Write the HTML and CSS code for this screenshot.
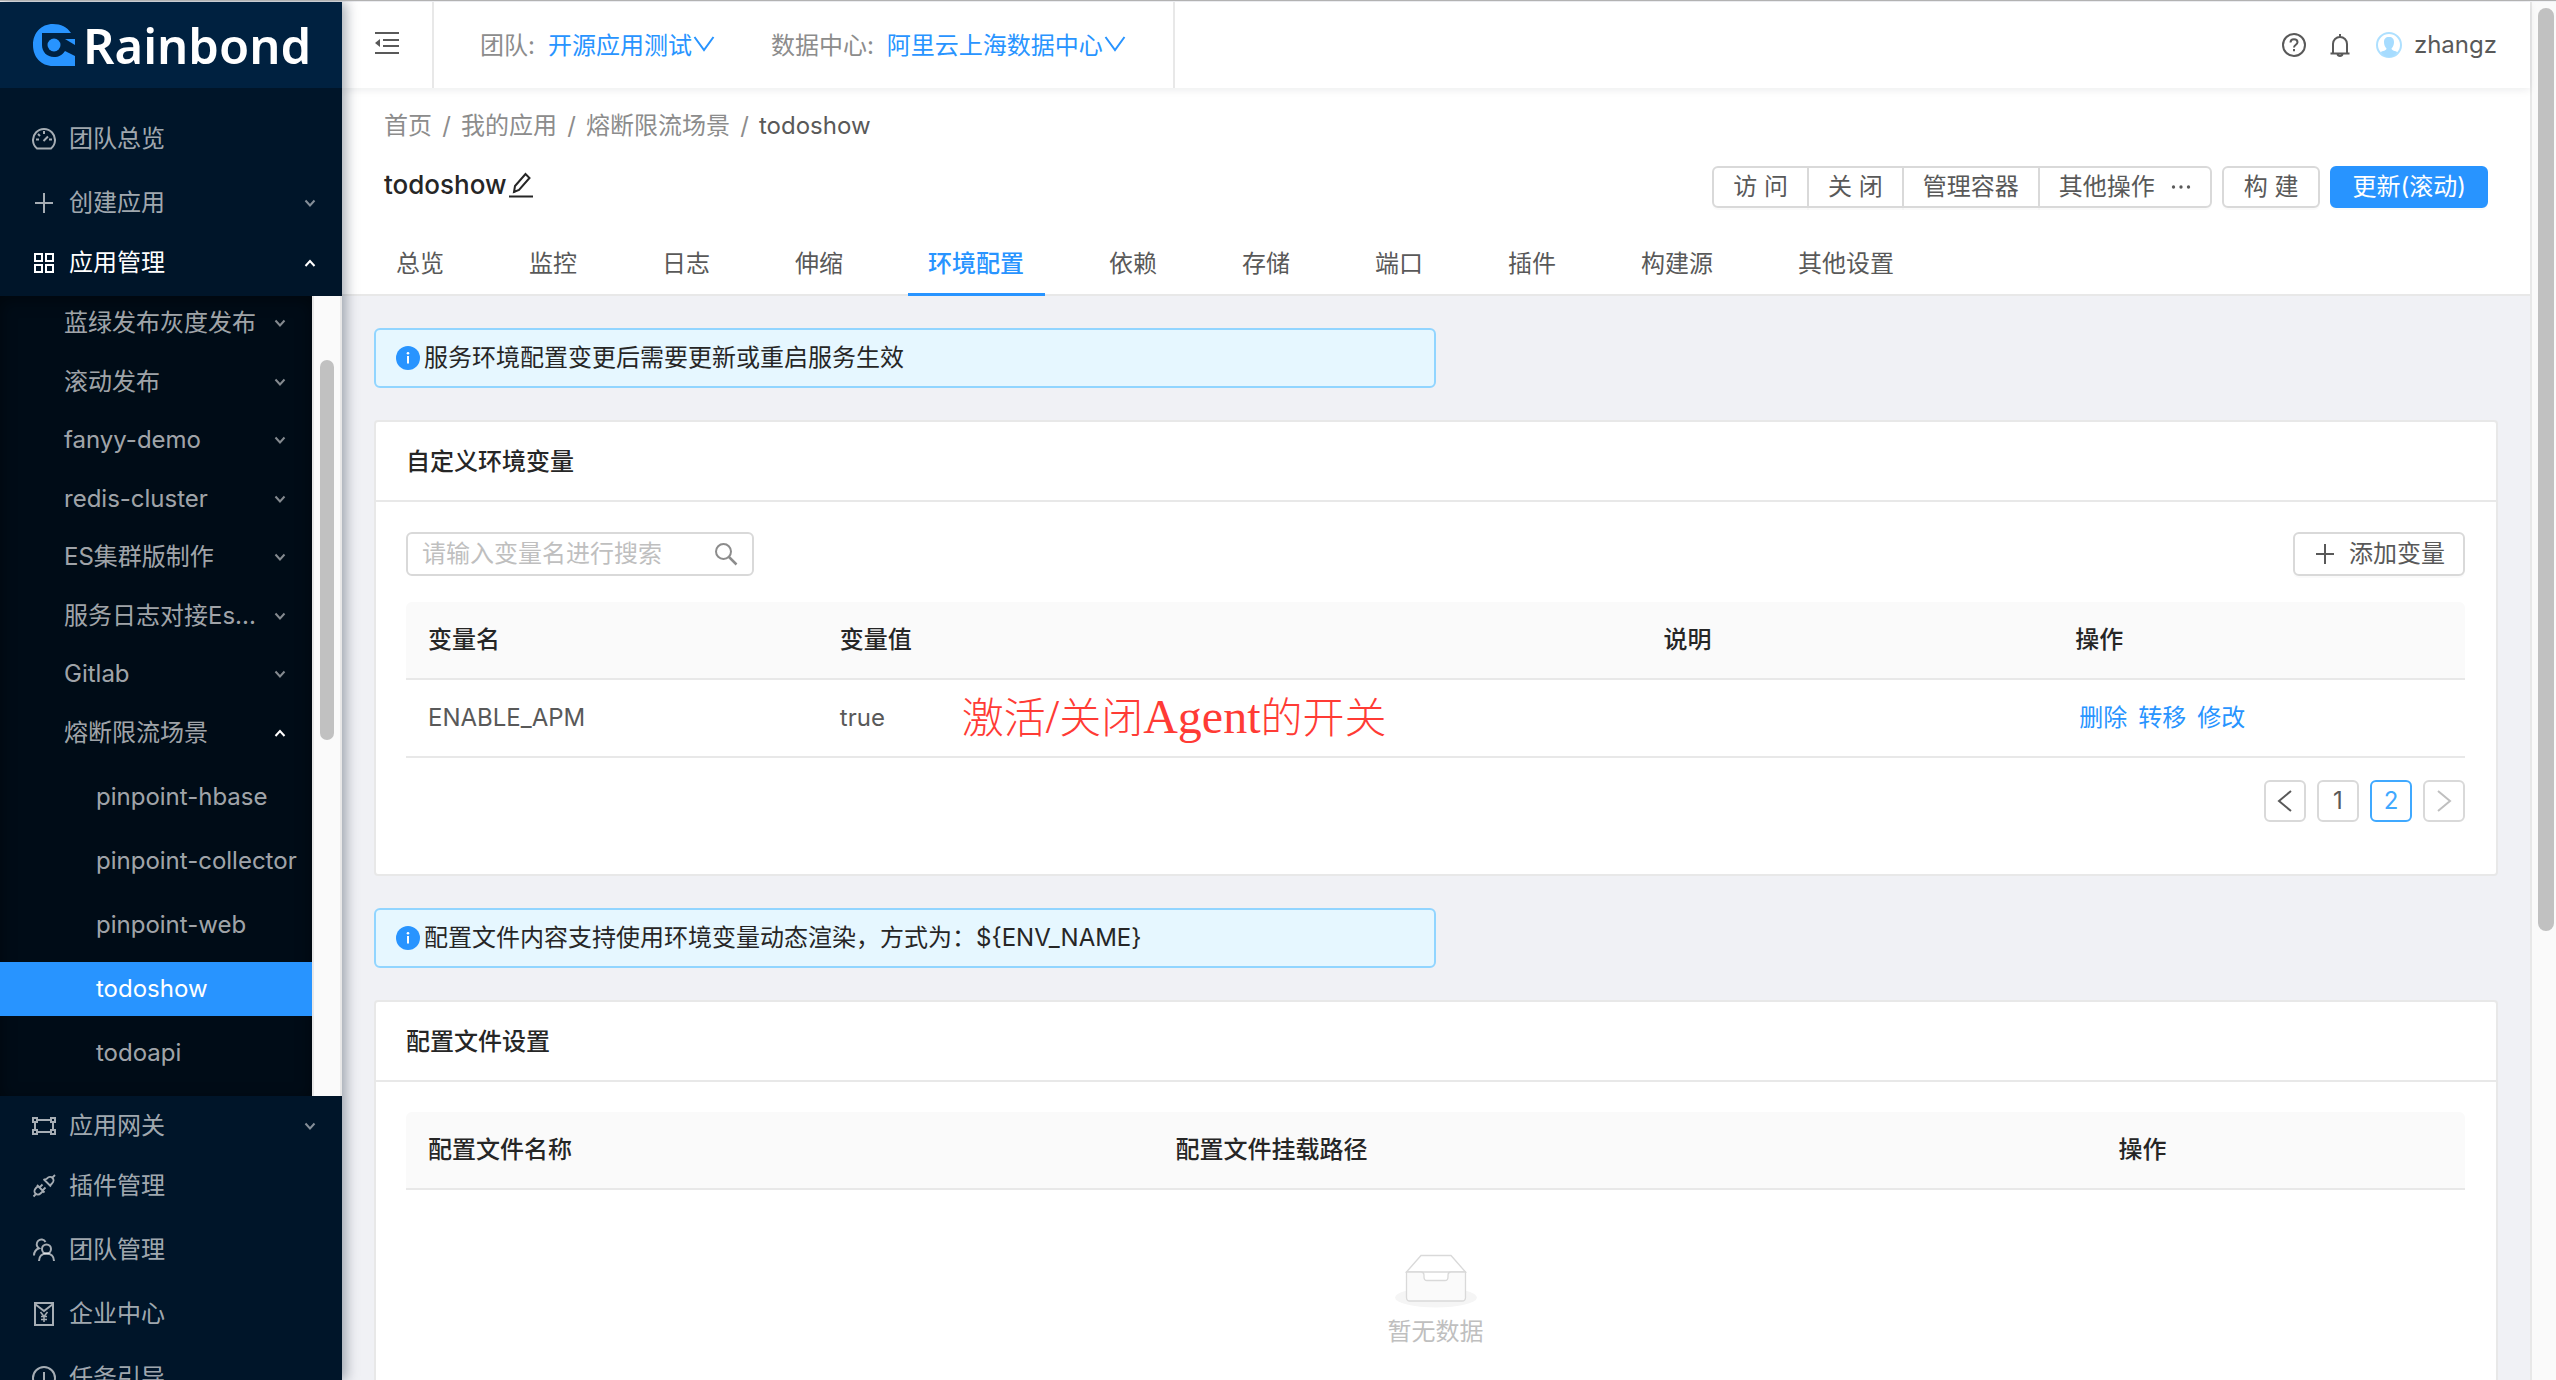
FILE: index.html
```html
<!DOCTYPE html>
<html lang="zh-CN">
<head>
<meta charset="utf-8">
<meta name="viewport" content="width=device-width, initial-scale=1">
<title>Rainbond - todoshow</title>
<link rel="stylesheet" href="styles.css">
</head>
<body>
<svg class="sprite" aria-hidden="true">
  <symbol id="i-down" viewBox="0 0 12 12"><path d="M1.5 3.5 6 8.500l4.500-5" fill="none" stroke="currentColor" stroke-width="2"/></symbol>
  <symbol id="i-up" viewBox="0 0 12 12"><path d="M1.500 9 6 4l4.500 5" fill="none" stroke="currentColor" stroke-width="2"/></symbol>
  <symbol id="i-info" viewBox="0 0 24 24"><circle cx="12" cy="12" r="12" fill="currentColor"/><path d="M12 10v7.500" stroke="#fff" stroke-width="2"/><circle cx="12" cy="7.300" r="1.300" fill="#fff"/></symbol>
  <symbol id="i-plus" viewBox="0 0 24 24"><path d="M12 2v20M3 12h18" fill="none" stroke="currentColor" stroke-width="2"/></symbol>
</svg>
<div class="layout">
  <aside class="sider">
    <a class="logo" href="#">
      <svg class="logo-mark" viewBox="0 0 42 42" aria-hidden="true">
        <path fill="#2894ff" d="M38 9H9v12c0 7 5 12 12 12 5 0 8-2 11-6l10 5v10H20C8 42 0 33 0 21S8 0 20 0c8 0 14 3 18 9z"/>
        <circle cx="21" cy="21" r="6.500" fill="#2894ff"/>
        <path fill="#2894ff" d="M32 15h10v6z"/>
      </svg>
      <span>Rainbond</span>
    </a>
    <nav class="menu">
      <a class="item" href="#">
        <svg class="icon" viewBox="0 0 24 24" aria-hidden="true"><g fill="none" stroke="currentColor" stroke-width="2"><path d="M5 21.500a11 11 0 1 1 14 0z"/><path d="M11.500 14 16 9.500M12 4v3M4 12.500h3M17 12.500h3M6 7l2 2" /></g></svg>
        <span>团队总览</span>
      </a>
      <a class="item sub" href="#">
        <svg class="icon" aria-hidden="true"><use href="#i-plus"/></svg>
        <span>创建应用</span>
        <svg class="arrow" aria-hidden="true"><use href="#i-down"/></svg>
      </a>
      <a class="item sub open" href="#">
        <svg class="icon" viewBox="0 0 24 24" aria-hidden="true"><path d="M3 3h7v7H3zM14 3h7v7h-7zM3 14h7v7H3zM14 14h7v7h-7z" fill="none" stroke="currentColor" stroke-width="2"/></svg>
        <span>应用管理</span>
        <svg class="arrow" aria-hidden="true"><use href="#i-up"/></svg>
      </a>
      <div class="apps">
        <div class="apps-body">
          <div class="app-list">
            <a href="#"><span>蓝绿发布灰度发布</span><svg class="arrow" aria-hidden="true"><use href="#i-down"/></svg></a>
            <a href="#"><span>滚动发布</span><svg class="arrow" aria-hidden="true"><use href="#i-down"/></svg></a>
            <a href="#"><span>fanyy-demo</span><svg class="arrow" aria-hidden="true"><use href="#i-down"/></svg></a>
            <a href="#"><span>redis-cluster</span><svg class="arrow" aria-hidden="true"><use href="#i-down"/></svg></a>
            <a href="#"><span>ES集群版制作</span><svg class="arrow" aria-hidden="true"><use href="#i-down"/></svg></a>
            <a href="#"><span>服务日志对接Es...</span><svg class="arrow" aria-hidden="true"><use href="#i-down"/></svg></a>
            <a href="#"><span>Gitlab</span><svg class="arrow" aria-hidden="true"><use href="#i-down"/></svg></a>
            <a href="#"><span>熔断限流场景</span><svg class="arrow lit" aria-hidden="true"><use href="#i-up"/></svg></a>
          </div>
          <div class="service-list">
            <a href="#">pinpoint-hbase</a>
            <a href="#">pinpoint-collector</a>
            <a href="#">pinpoint-web</a>
            <a href="#" class="current">todoshow</a>
            <a href="#">todoapi</a>
          </div>
        </div>
        <div class="track"><div class="thumb apps-thumb"></div></div>
      </div>
      <a class="item sub" href="#">
        <svg class="icon" viewBox="0 0 24 24" aria-hidden="true"><g fill="none" stroke="currentColor" stroke-width="2"><path d="M1 4h4v4H1zM19 4h4v4h-4zM1 16h4v4H1zM19 16h4v4h-4zM5 6h14M5 18h14M3 8v8M21 8v8"/></g></svg>
        <span>应用网关</span>
        <svg class="arrow" aria-hidden="true"><use href="#i-down"/></svg>
      </a>
      <a class="item" href="#">
        <svg class="icon" viewBox="0 0 24 24" aria-hidden="true"><g fill="none" stroke="currentColor" stroke-width="1.800"><path d="m12.500 6 5.500 5.500 2-2c2-2 2-4 .5-5.500s-3.500-1.500-5.500.5zM11.500 5l7.500 7.500M5 11l7.500 7.500M6 12l-2 2c-2 2-2 4-.5 5.500s3.500 1.500 5.500-.5l2-2M20.500 3.500 23 1M1.500 22.500 4 20M8 13l2.500-2.500M11 16l2.500-2.500"/></g></svg>
        <span>插件管理</span>
      </a>
      <a class="item" href="#">
        <svg class="icon" viewBox="0 0 24 24" aria-hidden="true"><g fill="none" stroke="currentColor" stroke-width="2"><circle cx="14.500" cy="11" r="4.500"/><path d="M7 23c0-4.500 3-7.500 7.500-7.500S22 18.500 22 23M13.500 4A4.700 4.700 0 1 0 7 10.300C4 11.500 2 14 2 17.500"/></g></svg>
        <span>团队管理</span>
      </a>
      <a class="item" href="#">
        <svg class="icon" viewBox="0 0 24 24" aria-hidden="true"><g fill="none" stroke="currentColor" stroke-width="2"><path d="M3 1h18v22H3zM3 2l9 7 9-7"/><path d="m8.500 10 3.500 4.500 3.500-4.500M12 14v6M9 14.500h6M9 17.500h6" stroke-width="1.500"/></g></svg>
        <span>企业中心</span>
      </a>
      <a class="item" href="#">
        <svg class="icon" viewBox="0 0 24 24" aria-hidden="true"><g fill="none" stroke="currentColor" stroke-width="2"><circle cx="12" cy="12" r="11"/><path d="M12 6v8M12 16v2"/></g></svg>
        <span>任务引导</span>
      </a>
    </nav>
  </aside>

  <div class="main">
    <header class="topbar">
      <button class="fold" type="button" aria-label="收起菜单">
        <svg viewBox="0 0 24 24" aria-hidden="true"><path d="M0 2h24M8 9h16M8 15h16M0 22h24" stroke="currentColor" stroke-width="2"/><path d="M0 12l5-4v8z" fill="currentColor"/></svg>
      </button>
      <div class="scope">
        <div class="pick"><span>团队:</span><a href="#">开源应用测试<svg viewBox="0 0 24 24" aria-hidden="true"><path d="M2.500 3 12 16l9.500-13" fill="none" stroke="currentColor" stroke-width="2"/></svg></a></div>
        <div class="pick"><span>数据中心:</span><a href="#">阿里云上海数据中心<svg viewBox="0 0 24 24" aria-hidden="true"><path d="M2.500 3 12 16l9.500-13" fill="none" stroke="currentColor" stroke-width="2"/></svg></a></div>
      </div>
      <div class="user">
        <svg class="icon" viewBox="0 0 24 24" aria-hidden="true"><g fill="none" stroke="currentColor" stroke-width="2"><circle cx="12" cy="12" r="11"/><path d="M8.500 9.500c0-2 1.500-3.300 3.500-3.300s3.500 1.300 3.500 3.100c0 2.400-3.500 2.500-3.500 5.200M12 16v2.200"/></g></svg>
        <svg class="icon bell" viewBox="0 0 24 24" aria-hidden="true"><path d="M2.500 20.500h19M5 20V11a7 7 0 0 1 14 0v9M12 1v3M9.500 21c.5 2.500 4.500 2.500 5 0" fill="none" stroke="currentColor" stroke-width="2"/></svg>
        <svg class="avatar" viewBox="0 0 26 26" aria-hidden="true"><circle cx="13" cy="13" r="12" fill="#fff" stroke="#aee0ff" stroke-width="2"/><path fill="#a6dcff" d="M13 5c3.500 0 5 2 5 5s-1 5-2.500 6.500c0 2 4 2.500 6 3.500-2 3-5 5-8.500 5s-6.500-2-8.500-5c2-1 6-1.500 6-3.500C9 15 8 13 8 10s1.500-5 5-5z"/></svg>
        <span>zhangz</span>
      </div>
    </header>

    <section class="page-head">
      <nav class="crumbs" aria-label="面包屑"><a href="#">首页</a><i>/</i><a href="#">我的应用</a><i>/</i><a href="#">熔断限流场景</a><i>/</i><span>todoshow</span></nav>
      <div class="title-row">
        <h1>todoshow<svg viewBox="0 0 24 26" aria-hidden="true"><path d="M0 24.500h24M5 20l1-6L16.500 2l4 4L10 18zM5 20l2-1" fill="none" stroke="currentColor" stroke-width="2"/></svg></h1>
        <div class="actions">
          <div class="group">
            <button class="btn" type="button">访 问</button>
            <button class="btn" type="button">关 闭</button>
            <button class="btn" type="button">管理容器</button>
            <button class="btn" type="button">其他操作<svg viewBox="0 0 24 24" aria-hidden="true"><g fill="currentColor"><circle cx="3" cy="12" r="2"/><circle cx="12" cy="12" r="2"/><circle cx="21" cy="12" r="2"/></g></svg></button>
          </div>
          <button class="btn" type="button">构 建</button>
          <button class="btn primary" type="button">更新(滚动)</button>
        </div>
      </div>
      <nav class="tabs">
        <a href="#">总览</a><a href="#">监控</a><a href="#">日志</a><a href="#">伸缩</a><a href="#" class="active">环境配置</a><a href="#">依赖</a><a href="#">存储</a><a href="#">端口</a><a href="#">插件</a><a href="#">构建源</a><a href="#">其他设置</a>
      </nav>
    </section>

    <main class="content">
      <p class="alert"><svg class="icon" aria-hidden="true"><use href="#i-info"/></svg><span>服务环境配置变更后需要更新或重启服务生效</span></p>

      <section class="card">
        <h2>自定义环境变量</h2>
        <div class="card-body">
          <div class="toolbar">
            <label class="search">
              <input type="text" placeholder="请输入变量名进行搜索" aria-label="变量名">
              <svg viewBox="0 0 24 24" aria-hidden="true"><circle cx="9.500" cy="9.500" r="7.500" fill="none" stroke="currentColor" stroke-width="2"/><path d="m15 15 7.500 7.500" stroke="currentColor" stroke-width="2.500"/></svg>
            </label>
            <button class="btn add" type="button"><svg class="icon" aria-hidden="true"><use href="#i-plus"/></svg>添加变量</button>
          </div>
          <table class="env">
            <thead><tr><th>变量名</th><th>变量值</th><th>说明</th><th>操作</th></tr></thead>
            <tbody><tr>
              <td>ENABLE_APM</td>
              <td class="noted">true<span class="note">激活<b>/</b>关闭<b>Agent</b>的开关</span></td>
              <td></td>
              <td><div class="links"><a href="#">删除</a><a href="#">转移</a><a href="#">修改</a></div></td>
            </tr></tbody>
          </table>
          <nav class="pager" aria-label="分页">
            <button type="button" aria-label="上一页"><svg viewBox="0 0 24 24" aria-hidden="true"><path d="M18 2 6 12l12 10" fill="none" stroke="currentColor" stroke-width="2"/></svg></button>
            <button type="button">1</button>
            <button type="button" class="on">2</button>
            <button type="button" disabled aria-label="下一页"><svg viewBox="0 0 24 24" aria-hidden="true"><path d="m6 2 12 10L6 22" fill="none" stroke="currentColor" stroke-width="2"/></svg></button>
          </nav>
        </div>
      </section>

      <p class="alert"><svg class="icon" aria-hidden="true"><use href="#i-info"/></svg><span>配置文件内容支持使用环境变量动态渲染，方式为：${ENV_NAME}</span></p>

      <section class="card">
        <h2>配置文件设置</h2>
        <div class="card-body">
          <table class="files">
            <thead><tr><th>配置文件名称</th><th>配置文件挂载路径</th><th>操作</th></tr></thead>
          </table>
          <div class="empty">
            <svg viewBox="0 0 82 54" aria-hidden="true"><ellipse cx="41" cy="43.500" rx="41" ry="10" fill="#f5f5f5"/><path d="M11.500 18 26 1.500h30L70.500 18z" fill="#fff" stroke="#d9d9d9" stroke-width="1.300"/><path d="M11.500 18H26c2 0 3 1.500 3 3.500V23c0 2 1 3.500 3 3.500h18c2 0 3-1.500 3-3.500v-1.500c0-2 1-3.500 3-3.500h14.500v25.500c0 2-1.500 3.500-3.500 3.500H15c-2 0-3.500-1.500-3.500-3.500z" fill="#fafafa" stroke="#d9d9d9" stroke-width="1.300"/></svg>
            <span>暂无数据</span>
          </div>
        </div>
      </section>
    </main>
  </div>
  <div class="track page-track"><div class="thumb page-thumb"></div></div>
</div>
</body>
</html>
```

FILE: styles.css
```css
* { box-sizing: border-box; }

:root {
  --blue: #2894ff;
  --line: #e8e8e8;
  --edge: #d9d9d9;
  --text: #595959;
  --strong: #262626;
  --muted: #8c8c8c;
}

body {
  margin: 0;
  height: 100vh;
  overflow: hidden;
  font: 24px/36px Inter, "Noto Sans CJK SC", sans-serif;
  color: var(--text);
  background: #f0f1f5;
}

a { color: inherit; text-decoration: none; }
button, input { font: inherit; color: inherit; }
svg { display: block; flex: none; }
.sprite { position: absolute; width: 0; height: 0; }
.icon { width: 24px; height: 24px; }
.arrow { width: 12px; height: 12px; opacity: .8; }

.layout {
  display: flex;
  height: 100vh;
  padding-top: 1px;
  border-top: 1px solid #b2b2b2;
  overflow: hidden;
}

/* sidebar */
.sider {
  position: relative;
  z-index: 2;
  flex: none;
  width: 342px;
  background: #001529;
  box-shadow: 4px 0 12px rgba(0, 21, 41, .35);
  color: rgba(255, 255, 255, .65);
}
.logo {
  display: flex;
  align-items: center;
  gap: 8px;
  height: 86px;
  padding-left: 33px;
  background: #002140;
  color: #fff;
  font: 600 49px/60px "Noto Sans", sans-serif;
}
.logo-mark { width: 42px; height: 42px; }
.menu { padding-top: 19px; }
.item {
  display: flex;
  align-items: center;
  gap: 13px;
  height: 56px;
  margin: 4px 0;
  padding: 0 26px 0 32px;
}
.item + .item { margin-top: 8px; }
.item.sub { margin-bottom: 0; }
.item.sub + .item { margin-top: 4px; }
.item .arrow { margin-left: auto; }
.open { color: #fff; }
.open .arrow, .lit { opacity: 1; color: #fff; }

.apps {
  display: flex;
  margin: 5px 0 -2px;
  height: 800px;
  overflow: hidden;
}
.apps-body {
  flex: 1;
  background: #000c17;
  box-shadow: inset 0 4px 16px rgba(0, 0, 0, .45);
}
.app-list {
  display: grid;
  grid-auto-rows: 1fr;
  height: 468px;
  margin-top: -2px;
}
.app-list a {
  display: flex;
  align-items: center;
  justify-content: space-between;
  padding: 0 26px 0 64px;
}
.service-list {
  display: grid;
  gap: 10px;
  padding-top: 8px;
}
.service-list a {
  height: 54px;
  padding-left: 96px;
  line-height: 54px;
}
.service-list .current { background: var(--blue); color: #fff; }

/* scrollbars */
.track {
  flex: none;
  width: 30px;
  padding: 0 6px;
  background: #fafafa;
  border: solid var(--line);
  border-width: 0 2px;
}
.thumb { border-radius: 8px; background: #c1c1c1; }
.apps-thumb { height: 380px; margin-top: 64px; }
.page-track { width: 26px; border-right: 0; padding-right: 2px; }
.page-thumb { height: 67%; margin-top: 6px; }

/* top bar */
.main {
  display: flex;
  flex: 1;
  flex-direction: column;
  min-width: 0;
}
.topbar {
  position: relative;
  z-index: 1;
  display: flex;
  flex: none;
  height: 86px;
  background: #fff;
  box-shadow: 0 2px 8px rgba(0, 21, 41, .08);
}
.fold {
  width: 92px;
  padding: 0 0 4px 33px;
  border: 0;
  border-right: 2px solid var(--line);
  background: none;
}
.fold svg { width: 24px; height: 24px; }
.scope {
  display: flex;
  align-items: center;
  gap: 55px;
  padding: 2px 46px 0;
  border-right: 2px solid var(--line);
}
.pick { display: flex; gap: 13px; color: var(--muted); }
.pick a { display: flex; align-items: center; color: var(--blue); }
.pick svg { width: 24px; height: 24px; }
.user {
  display: flex;
  align-items: center;
  margin-left: auto;
  padding-right: 33px;
}
.bell { margin: 0 24px 0 22px; }
.avatar { width: 26px; height: 26px; margin-right: 12px; }

/* page heading */
.page-head {
  flex: none;
  padding: 20px 42px 0;
  background: #fff;
  border-bottom: 2px solid var(--line);
}
.crumbs { display: flex; color: var(--muted); }
.crumbs i { width: 29px; text-align: center; font-style: normal; }
.crumbs span { color: var(--text); }
.title-row {
  display: flex;
  align-items: center;
  justify-content: space-between;
  height: 42px;
  margin-top: 22px;
}
h1 {
  display: flex;
  align-items: center;
  gap: 2px;
  margin: 0;
  padding-bottom: 4px;
  color: var(--strong);
  font-size: 26px;
  font-weight: 500;
}
h1 svg { width: 24px; height: 26px; }
.actions { display: flex; gap: 10px; }
.group { display: flex; }
.btn {
  display: flex;
  align-items: center;
  height: 42px;
  padding: 0 20px;
  border: 2px solid var(--edge);
  border-radius: 6px;
  background: #fff;
  box-shadow: 0 2px 0 rgba(0, 0, 0, .02);
  white-space: nowrap;
}
.btn.primary { background: var(--blue); border-color: var(--blue); color: #fff; }
.group .btn { padding: 0 19px; border-radius: 0; margin-left: -2px; }
.group .btn:first-child { border-radius: 6px 0 0 6px; }
.group .btn:last-child { border-radius: 0 6px 6px 0; }
.group svg { width: 20px; height: 20px; margin-left: 16px; }
.tabs {
  display: flex;
  gap: 44px;
  margin: 22px 0 -2px -8px;
}
.tabs a {
  height: 66px;
  padding: 16px 21px 0 20px;
}
.tabs .active {
  border-bottom: 3px solid var(--blue);
  color: var(--blue);
  font-weight: 500;
}

/* content */
.content {
  display: flex;
  flex-direction: column;
  gap: 32px;
  padding: 32px;
}
.alert {
  display: flex;
  flex: none;
  align-items: center;
  gap: 4px;
  width: 50%;
  height: 60px;
  margin: 0;
  padding: 0 20px;
  border: 2px solid #91d5ff;
  border-radius: 6px;
  background: #e6f7ff;
  color: var(--strong);
}
.alert .icon { color: var(--blue); }
.card {
  flex: none;
  border: 2px solid var(--line);
  border-radius: 4px;
  background: #fff;
}
h2 {
  height: 80px;
  margin: 0;
  padding: 22px 30px;
  border-bottom: 2px solid var(--line);
  color: var(--strong);
  font-size: 24px;
  font-weight: 500;
}
.card-body { padding: 30px 31px 52px 30px; }
.toolbar {
  display: flex;
  justify-content: space-between;
  margin-bottom: 26px;
}
.search {
  display: flex;
  align-items: center;
  width: 348px;
  height: 44px;
  padding: 0 14px;
  border: 2px solid var(--edge);
  border-radius: 6px;
  color: var(--muted);
}
.search input {
  flex: 1;
  min-width: 0;
  padding: 0;
  border: 0;
  outline: 0;
  background: none;
}
.search input::placeholder { color: #bfbfbf; opacity: 1; }
.search svg { width: 24px; height: 24px; }
.add { height: 44px; padding: 0 18px; gap: 12px; }

table {
  width: 100%;
  border-collapse: separate;
  border-spacing: 0;
  table-layout: fixed;
}
th, td {
  height: 78px;
  padding: 0 22px;
  border-bottom: 2px solid var(--line);
  text-align: left;
}
th {
  background: #fafafa;
  color: var(--strong);
  font-weight: 500;
}
th:first-child { border-top-left-radius: 6px; }
th:last-child { border-top-right-radius: 6px; }
.env th { width: 20%; }
.env th:nth-child(2) { width: 40%; }
.files th:nth-child(1) { width: 36.3%; }
.files th:nth-child(2) { width: 45.8%; }
.noted { position: relative; }
.note {
  position: absolute;
  top: 8px;
  left: 144px;
  color: #ff3b35;
  font: 300 42px/54px "Noto Sans CJK SC", sans-serif;
  white-space: nowrap;
}
.note b { font: 400 48px/54px "Liberation Serif", serif; }
.links { display: flex; gap: 11px; padding-left: 4px; color: var(--blue); }

.pager {
  display: flex;
  justify-content: flex-end;
  gap: 11px;
  margin-top: 22px;
}
.pager button {
  display: grid;
  place-items: center;
  width: 42px;
  height: 42px;
  padding: 0;
  border: 2px solid var(--edge);
  border-radius: 6px;
  background: #fff;
}
.pager svg { width: 24px; height: 24px; }
.pager .on { border-color: #40a9ff; color: #40a9ff; }
.pager button:disabled { color: #bfbfbf; }

.empty {
  display: flex;
  flex-direction: column;
  align-items: center;
  gap: 6px;
  padding: 64px 0;
  color: #bfbfbf;
}
.empty svg { width: 82px; height: 54px; }
```
